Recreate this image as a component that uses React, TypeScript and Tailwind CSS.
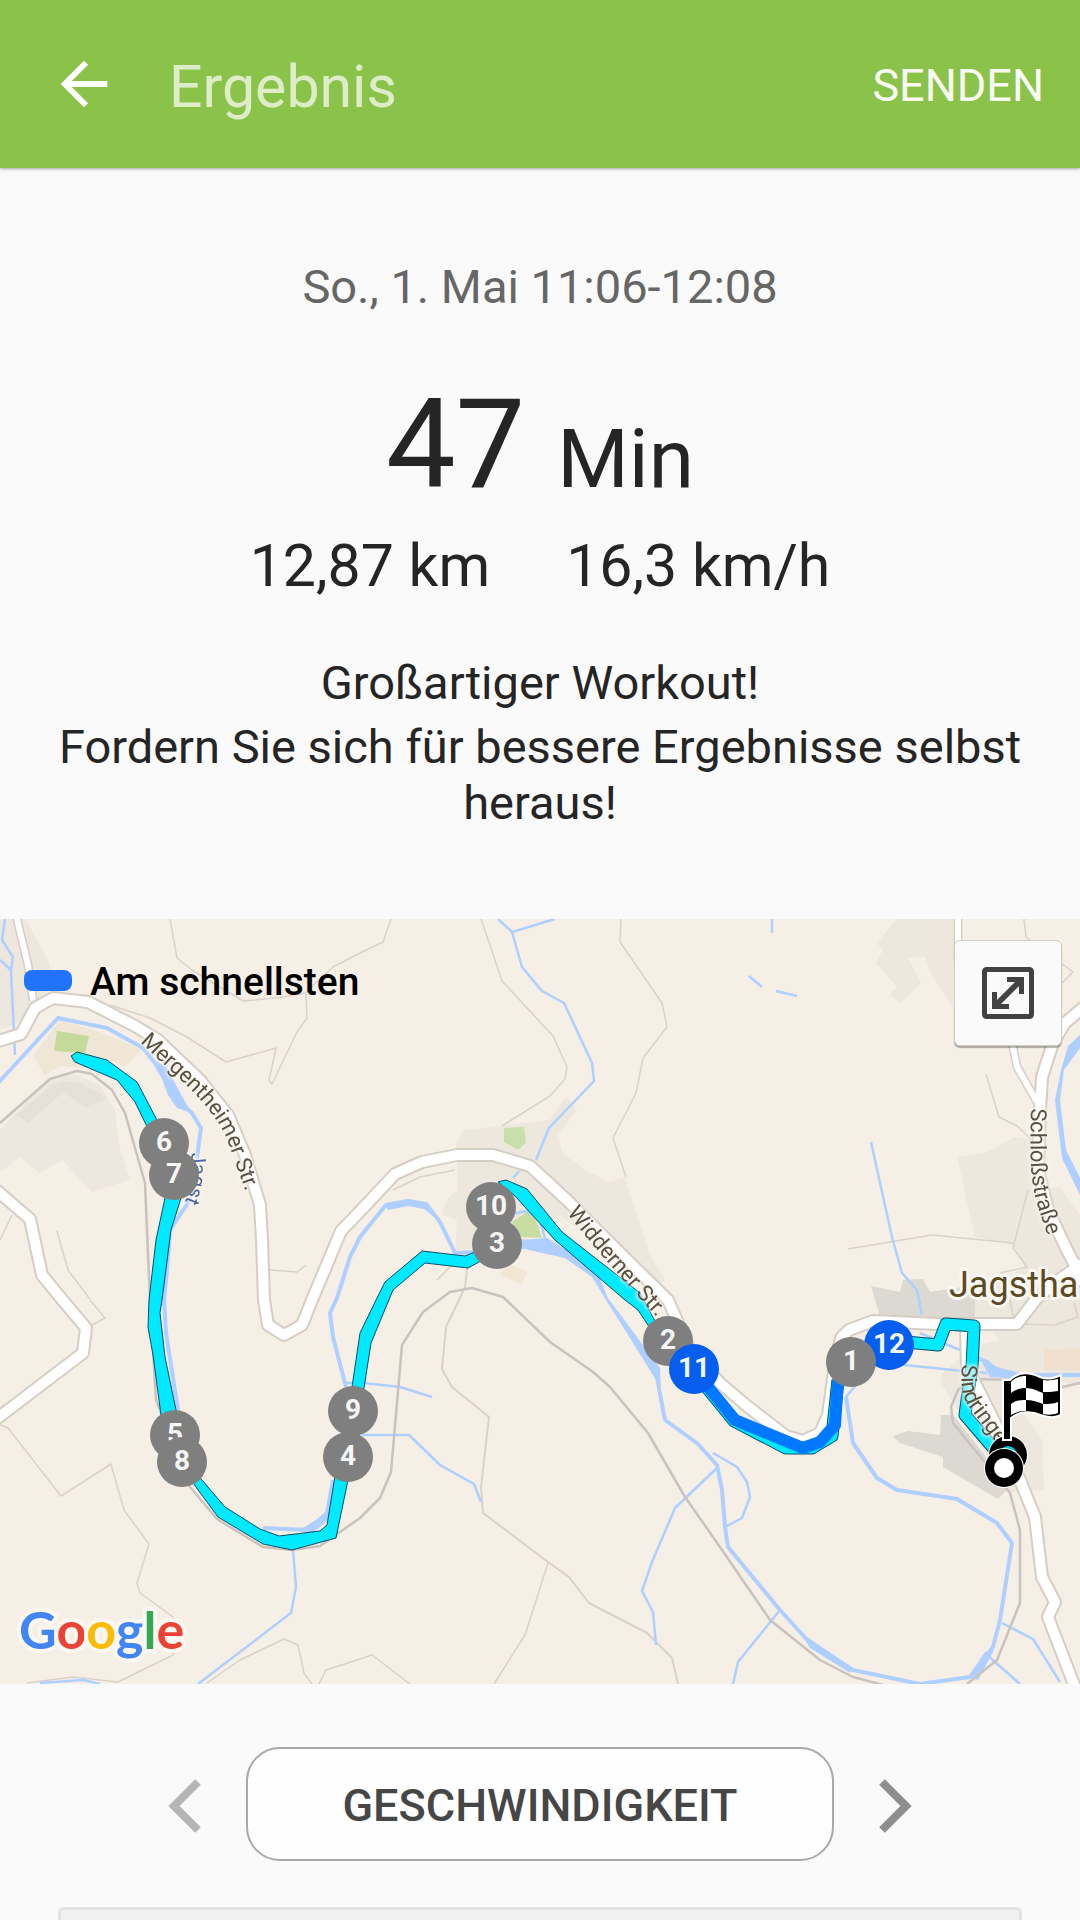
import { MdArrowBack } from "react-icons/md";

interface MarkerItem {
    km: number;
    x: number;
    y: number;
    fast?: boolean;
}

// drawing order matters, later markers cover the earlier ones
const markers: MarkerItem[] = [
    { km: 6, x: 164, y: 1143 },
    { km: 7, x: 174, y: 1175 },
    { km: 5, x: 175, y: 1435 },
    { km: 8, x: 182, y: 1462 },
    { km: 10, x: 491, y: 1207 },
    { km: 3, x: 497, y: 1244 },
    { km: 9, x: 353, y: 1411 },
    { km: 4, x: 348, y: 1457 },
    { km: 2, x: 668, y: 1341 },
    { km: 11, x: 694, y: 1369, fast: true },
    { km: 12, x: 889, y: 1345, fast: true },
    { km: 1, x: 851, y: 1362 },
];

const areas = [
    { fill: "#eee7de", points: "0,919 26,919 50,965 46,1000 20,1022 0,1030" },
    { fill: "#f0e6d6", points: "33,1056 60,1020 100,1032 142,1050 125,1067 107,1059 90,1068 60,1066 45,1075" },
    { fill: "#eee7df", points: "0,1130 45,1082 75,1074 100,1085 115,1110 119,1145 130,1180 92,1192 62,1160 40,1173 20,1157 0,1172" },
    { fill: "#e7e0d9", points: "16,1115 55,1083 63,1081 80,1083 108,1098 85,1107 63,1092 28,1123" },
    { fill: "#eee7de", points: "456,1143 464,1130 550,1120 566,1096 577,1110 558,1135 562,1152 585,1170 608,1182 625,1178 650,1255 665,1280 655,1290 560,1215 523,1243 455,1250 457,1220 442,1215 448,1198 458,1190" },
    { fill: "#eee7de", points: "897,919 953,919 953,1007 930,972 925,957 908,958 921,983 901,1003 890,995 897,987 876,963 883,950 877,943" },
    { fill: "#eee7de", points: "957,1157 985,1153 1015,1137 1031,1140 1033,1190 1060,1187 1080,1215 1080,1385 1000,1373 960,1350 1000,1340 960,1300 1025,1268 1013,1245 975,1237" },
    { fill: "#eee7de", points: "941,1375 975,1345 1000,1380 1042,1440 1044,1490 1010,1492 941,1383" },
    { fill: "#f0e1ce", points: "1044,1350 1080,1348 1080,1370 1044,1370" },
    { fill: "#dcd8d2", points: "871,1286 900,1292 903,1280 923,1279 930,1292 975,1285 975,1318 880,1316" },
    { fill: "#dcd8d2", points: "893,1436 908,1431 940,1435 941,1415 953,1415 1010,1487 998,1499 943,1467 943,1457 900,1443" },
    { fill: "#f0e6d3", points: "507,1263 527,1272 522,1284 500,1275" },
    { fill: "#c3da9a", points: "57,1031 89,1036 85,1053 54,1051" },
    { fill: "#c8dfab", points: "504,1128 524,1127 526,1143 518,1150 504,1142" },
    { fill: "#c6dca0", points: "512,1222 527,1212 535,1218 542,1238 522,1237" },
];

const footpaths = [
    "M170 919L177 958L192 970L243 1001L283 997L305 993L333 967L360 953L383 942L391 919",
    "M306 994L307 1018L297 1032L272 1084L269 1080L276 1048L226 1062L187 1037L150 1018L110 1005",
    "M12 1215L0 1240",
    "M57 1231L68 1270L90 1299",
    "M90 1300L105 1318L92 1325",
    "M270 1270L297 1272L306 1265",
    "M0 1425L8 1428L61 1496L111 1464L124 1510L149 1544L137 1583L140 1593L173 1617V1655L118 1682L73 1677L27 1683",
    "M207 1683L240 1660L284 1639L298 1645L304 1673L312 1684",
    "M319 1684L326 1670L360 1659L372 1655L410 1684",
    "M548 1563L525 1635L494 1684",
    "M481 919L502 981L553 1036L567 1067L565 1079L550 1096L502 1126",
    "M621 919L620 942L662 1003L667 1027L643 1058L636 1093L613 1138L626 1177",
    "M393 1190L420 1177L455 1170",
    "M1024 919L1026 937L1073 972L1062 983",
    "M986 1074L999 1117L1017 1126L1032 1140",
    "M848 1249L932 1235L1013 1243",
    "M1028 1190L1013 1248L1027 1267L1000 1273",
    "M1010 1300L1015 1324L1055 1325L1078 1317L1074 1303",
    "M437 1280L455 1262",
];

const tracks = [
    "M468 1262L465 1287L459 1300L446 1327L442 1369L452 1387L489 1417L481 1487L483 1513L548 1562L569 1577L589 1603L647 1633L672 1658L678 1684",
];

const railways = [
    "M0 1123L50 1079L77 1071L92 1074L112 1090L125 1113L145 1183L150 1300L156 1400L190 1487L217 1519L263 1547L292 1550L320 1546L360 1518L380 1498L391 1472L402 1345L423 1312L450 1292L472 1288L503 1297L550 1342L593 1372L610 1387L648 1433L685 1497L720 1547L770 1620L820 1660L853 1677L887 1686",
    "M967 1684L997 1660L1020 1603L1020 1530L1010 1493L953 1423L951 1407L958 1390L973 1379L1020 1380L1063 1387L1080 1383",
];

const streams = [
    "M5 919L2 940L13 957L11 970L15 1055",
    "M0 960L12 971",
    "M498 919L512 932L555 919",
    "M512 932L522 967L542 991L564 1003L592 1063L594 1081L549 1128L536 1160",
    "M519 1171L513 1178",
    "M772 919V933",
    "M749 976L762 987",
    "M776 991L797 996",
    "M871 1142L892 1237L902 1273L917 1290L922 1315",
    "M345 1383L363 1383L400 1387L432 1397",
    "M362 1435L409 1435L440 1465L474 1484L481 1502",
    "M293 1550L296 1587L291 1613L198 1684",
    "M40 1683L83 1680L100 1684",
    "M717 1468L675 1508L652 1562L642 1591L653 1612L656 1645",
    "M713 1453L720 1457L737 1467L747 1482L750 1497L742 1518L725 1527",
    "M780 1610L738 1662L733 1684",
    "M1002 1623L1033 1639L1060 1682",
    "M987 1655L1020 1684",
    "M846 1397L857 1384",
    "M895 1364L953 1370L987 1373",
    "M920 1333L967 1353",
    "M512 1214L527 1211L540 1220L547 1247",
];

const rivers = [
    "M-2 1083L58 1018L107 1028L143 1048L155 1063L177 1100L192 1113L201 1128L197 1157L190 1200L170 1230L167 1270L164 1300L166 1333L178 1410",
    "M263 1528L308 1530L327 1513L333 1480",
    "M346 1387L333 1337L330 1313L337 1298L350 1257L360 1237L385 1206L408 1202L427 1205L440 1222L455 1253L477 1252L523 1243",
    "M655 1367L665 1420L697 1443L717 1465L722 1490L725 1527L728 1547L780 1610L810 1643L853 1670L920 1684L970 1677L993 1647L1000 1620L1012 1543L997 1523L957 1499L897 1490L877 1478L853 1443L846 1397",
    "M967 1353L987 1362L1003 1375H1080",
];

const riverAreas = [
    "155,1060 166,1067 188,1107 194,1114 177,1108 168,1095",
    "385,1203 408,1199 427,1202 438,1220 424,1209 408,1206 388,1210",
    "520,1240 547,1238 567,1250 597,1272 608,1298 660,1368 662,1415 656,1380 625,1330 606,1300 592,1277 565,1258 520,1248",
    "327,1513 336,1480 333,1515 312,1534 300,1530",
    "979,1357 997,1367 1020,1373 1020,1379 990,1377",
    "968,1677 985,1652 994,1650 978,1680",
    "800,1632 816,1643 853,1668 850,1673 810,1648",
    "1080,1035 1068,1046 1061,1070 1055,1100 1062,1158 1080,1195 1080,1178 1066,1150 1060,1100 1064,1070 1080,1048",
];

const narrowRoads = [
    "M16 915L28 965L33 1000",
    "M958 915V960L1008 1030L1013 1047L1017 1067L1037 1102",
];

const roads = [
    "M-5 1042L21 1034L35 1008L53 998L88 1002L135 1026L158 1040L200 1080L228 1115L245 1155L260 1205L262 1240L264 1300L268 1325L284 1335L302 1325L312 1300L341 1231L366 1205L395 1174L422 1162L457 1155L493 1155L530 1166L568 1201L620 1253L668 1300L690 1350L720 1383L747 1406L786 1436L803 1441L820 1433L828 1415L835 1365L841 1338L849 1330L873 1321L937 1324H1017L1037 1298L1060 1279L1085 1262",
    "M-5 1189L30 1219L42 1275L60 1297L86 1328L83 1353L-5 1420",
    "M1085 1006L1065 1023L1053 1043L1042 1077L1040 1110L1038 1170L1048 1210L1067 1250L1085 1285",
    "M966 1325L967 1367L997 1427L1020 1480L1035 1517L1042 1577L1055 1602L1048 1617L1078 1695",
];

const routePieces = [
    "71,1056 77,1052 107,1060 137,1082 158,1122 165,1143 155,1143 135,1102 117,1080 75,1062",
    "165,1198 156,1240 149,1300 148,1327 153,1355 161,1415 165,1440 182,1440 176,1410 165,1357 160,1313 162,1300 171,1230 181,1198 176,1180 168,1180",
    "190,1466 202,1480 225,1507 260,1529 279,1536 320,1531 327,1525 336,1470 352,1387 360,1333 376,1300 385,1282 422,1251 465,1256 475,1252 490,1256 468,1268 425,1263 393,1290 371,1343 364,1388 348,1480 336,1538 292,1550 263,1544 218,1517 185,1472",
    "498,1182 506,1180 527,1189 562,1232 640,1293 656,1323 662,1335 650,1328 638,1310 625,1300 555,1240 515,1196",
];

interface RoadLabelProps {
    id: string;
    d: string;
    text: string;
    size?: number;
    color?: string;
}

const RoadLabel = (props: RoadLabelProps) => {
    const { id, d, text, size = 22, color = "#57513f" } = props
    return (
        <g className="[filter:drop-shadow(0_0_2px_#fbf8f3)_drop-shadow(0_0_2px_#fbf8f3)]">
            <path id={id} d={d} fill="none" />
            <text fontSize={size} fill={color}>
                <textPath href={`#${id}`}>{text}</textPath>
            </text>
        </g>
    )
}

const FinishFlag = () => {
    return (
        <g>
            <circle cx="1008" cy="1455" r="20" fill="#fff" />
            <circle cx="1008" cy="1455" r="19" fill="#000" />
            <circle cx="1008" cy="1455" r="9" fill="#00c9dc" />
            <path d="M1003 1380H1010C1020 1370 1032 1373 1040 1377C1047 1380 1053 1379 1061 1375V1415C1051 1420 1042 1415 1034 1413C1025 1411 1018 1412 1011 1418V1440H1003Z" fill="#000" stroke="#fff" strokeWidth="2" />
            <path d="M1011 1382C1016 1377 1021 1376 1026 1376V1388C1021 1388 1016 1389 1011 1393Z" fill="#fff" />
            <path d="M1026 1388C1032 1388 1038 1391 1043 1393V1404C1038 1402 1032 1400 1026 1400Z" fill="#fff" />
            <path d="M1043 1380C1048 1381 1053 1380 1058 1379V1391C1053 1392 1048 1392 1043 1392Z" fill="#fff" />
            <path d="M1011 1404C1016 1400 1021 1400 1026 1400V1411C1021 1411 1016 1412 1011 1415Z" fill="#fff" />
            <path d="M1043 1404C1048 1404 1053 1404 1058 1402V1413C1053 1415 1048 1415 1043 1414Z" fill="#fff" />
            <circle cx="1004" cy="1468" r="20" fill="#fff" />
            <circle cx="1004" cy="1468" r="19" fill="#000" />
            <circle cx="1004" cy="1468" r="10" fill="#fff" />
        </g>
    )
}

const RouteMap = () => {
    return (
        <svg className="block w-full" viewBox="0 919 1080 765" fontFamily="Roboto, sans-serif">
            <rect x="0" y="919" width="1080" height="765" fill="#f6efe6" />
            {areas.map((item, key) => <polygon key={key} points={item.points} fill={item.fill} />)}

            <g fill="none" stroke="#d9d2c8" strokeLinejoin="round">
                {footpaths.map((d, key) => <path key={key} d={d} strokeWidth="1.5" />)}
                {tracks.map((d, key) => <path key={key} d={d} strokeWidth="2" />)}
            </g>
            <g fill="none" stroke="#aecfff" strokeLinejoin="round">
                {streams.map((d, key) => <path key={key} d={d} strokeWidth="2.5" />)}
                {rivers.map((d, key) => <path key={key} d={d} strokeWidth="4" />)}
            </g>
            {riverAreas.map((points, key) => <polygon key={key} points={points} fill="#aecfff" />)}
            <g fill="none" stroke="#c9c2bf" strokeWidth="2.5" strokeLinejoin="round">
                {railways.map((d, key) => <path key={key} d={d} />)}
            </g>

            {/* casing first, then the white surface */}
            <g fill="none" stroke="#d5cec5" strokeLinejoin="round">
                {narrowRoads.map((d, key) => <path key={key} d={d} strokeWidth="9" />)}
                {roads.map((d, key) => <path key={key} d={d} strokeWidth="14" />)}
            </g>
            <g fill="none" stroke="#fff" strokeLinejoin="round">
                {narrowRoads.map((d, key) => <path key={key} d={d} strokeWidth="6" />)}
                {roads.map((d, key) => <path key={key} d={d} strokeWidth="10" />)}
            </g>

            {/* track */}
            {routePieces.map((points, key) => (
                <polygon key={key} points={points} fill="#00e9ff" stroke="#07506b" strokeWidth="1" strokeLinejoin="round" />
            ))}
            <g fill="none" strokeLinejoin="round">
                <path d="M895 1341L938 1345L946 1324L974 1326L972 1367L967 1400L965 1415L995 1450" stroke="#07506b" strokeWidth="13" />
                <path d="M895 1341L938 1345L946 1324L974 1326L972 1367L967 1400L965 1415L995 1450" stroke="#00e9ff" strokeWidth="11" />
                <path d="M694 1372L734 1421L786 1448H812L832 1436L838 1380" stroke="#07506b" strokeWidth="13" />
                <path d="M694 1372L734 1421L786 1448H812L832 1436L838 1380" stroke="#00e9ff" strokeWidth="11" />
                <path d="M694 1370L735 1420L803 1448L820 1442L835 1425L838 1380" stroke="#0078ff" strokeWidth="12" />
            </g>

            <RoadLabel id="mergentheimer" d="M140 1042C175 1076 215 1105 229 1145S242 1180 250 1205" text="Mergentheimer Str." />
            <RoadLabel id="widderner" d="M567 1213C590 1243 625 1282 662 1323" text="Widderner Str." />
            <RoadLabel id="schloss" d="M1031 1108C1030 1160 1030 1180 1038 1207L1052 1248" text="Schloßstraße" />
            <RoadLabel id="sindringer" d="M962 1364C961 1382 960 1394 970 1408L1006 1456" text="Sindringe" />
            <RoadLabel id="jagst" d="M191 1153C193 1175 194 1185 180 1212" text="Jagst" size={20} color="#4a6799" />
            <text x="949" y="1297" fontSize="36" fill="#5c4a23" stroke="#fbf8f3" strokeWidth="6" strokeLinejoin="round" paintOrder="stroke">Jagstha</text>

            {markers.map((item) => (
                <g key={item.km}>
                    <circle cx={item.x} cy={item.y} r="25" fill={item.fast ? "#055eee" : "#7f7f7f"} />
                    <text x={item.x} y={item.y + 8} fontSize="28" fontWeight="700" textAnchor="middle" fill="#f6f6f6">{item.km}</text>
                </g>
            ))}
            <FinishFlag />

            <text x="19" y="1649" fontSize="52" fontWeight="700" fontFamily="Lato, sans-serif" stroke="#fbf7f2" strokeWidth="8" strokeLinejoin="round" paintOrder="stroke">
                <tspan fill="#4285f4">G</tspan>
                <tspan fill="#ea4335">o</tspan>
                <tspan fill="#fbbc05">o</tspan>
                <tspan fill="#4285f4">g</tspan>
                <tspan fill="#34a853">l</tspan>
                <tspan fill="#ea4335">e</tspan>
            </text>
        </svg>
    )
}

const App = () => {
    return (
        <div className="flex min-h-screen flex-col bg-[#fafafa] font-[Roboto,sans-serif] text-[#252525]">
            <header className="flex h-[168px] shrink-0 items-center bg-[#8bc34a] pr-9 pl-[49px] shadow-[0_1px_3px_rgba(0,0,0,0.35)]">
                <button type="button" aria-label="Zurück" className="text-white">
                    <MdArrowBack size={70} />
                </button>
                <h1 className="ml-[46px] grow pt-1.5 pl-1 text-[59px] leading-[70px] text-[#dcedc8]">Ergebnis</h1>
                <button type="button" className="pt-1 text-[45px] leading-[56px] text-[#f8fcf4]">SENDEN</button>
            </header>

            <section className="px-12 pt-[91px] pb-22 text-center">
                <div className="text-[47px] leading-[56px] text-[#666]">So., 1. Mai 11:06-12:08</div>
                <div className="mt-14 flex items-baseline justify-center gap-8">
                    <span className="text-[124px] leading-[148px]">47</span>
                    <span className="text-[82px] leading-[98px]">Min</span>
                </div>
                <div className="mt-3 flex justify-center gap-[76px] text-[59px] leading-[70px]">
                    <span>12,87 km</span>
                    <span>16,3 km/h</span>
                </div>
                <div className="mt-[54px] text-[47px] leading-[56px]">
                    <p>Großartiger Workout!</p>
                    <p className="mt-2">Fordern Sie sich für bessere Ergebnisse selbst heraus!</p>
                </div>
            </section>

            <section className="relative">
                <RouteMap />
                <div className="absolute top-9 left-6 flex items-center gap-[18px]">
                    <span className="h-[21px] w-12 rounded-[8px] bg-[#2173fb]"></span>
                    <span className="pt-1 text-[39px] leading-[46px] font-medium text-black">Am schnellsten</span>
                </div>
                <button type="button" aria-label="Karte vergrößern" className="absolute top-[21px] right-[18px] flex h-[106px] w-[108px] items-center justify-center rounded-[6px] border border-[#d0ccc6] bg-[#fafafa] shadow-[0_2px_1px_rgba(0,0,0,0.3)]">
                    <svg width="52" height="52" viewBox="0 0 52 52">
                        <rect x="2.5" y="2.5" width="47" height="47" rx="2" fill="none" stroke="#424242" strokeWidth="5" />
                        <path d="M25 10H42V27H37V19L19 37H27V42H10V25H15V33L33 15H25Z" fill="#424242" />
                    </svg>
                </button>
            </section>

            <section className="mt-[63px] flex items-center justify-center gap-11">
                <button type="button" aria-label="Vorherige" className="pt-1 text-[#b5b5b5]">
                    <svg width="34" height="56" viewBox="0 0 34 56">
                        <path d="M30 4L6 28L30 52" fill="none" stroke="currentColor" strokeWidth="8" />
                    </svg>
                </button>
                <button type="button" className="h-[114px] w-[588px] rounded-[34px] border-2 border-[#a9a9a9] bg-[#fefefe] pt-1 text-[45px] font-medium text-[#464646]">GESCHWINDIGKEIT</button>
                <button type="button" aria-label="Nächste" className="pt-1 text-[#8e8e8e]">
                    <svg width="34" height="56" viewBox="0 0 34 56">
                        <path d="M4 4L28 28L4 52" fill="none" stroke="currentColor" strokeWidth="8" />
                    </svg>
                </button>
            </section>

            <section className="mx-[58px] mt-[46px] min-h-3 grow rounded-t-[6px] border-[3px] border-b-0 border-[#e3e3e3] bg-[#f1f1f1]"></section>
        </div>
    );
}

export default App
